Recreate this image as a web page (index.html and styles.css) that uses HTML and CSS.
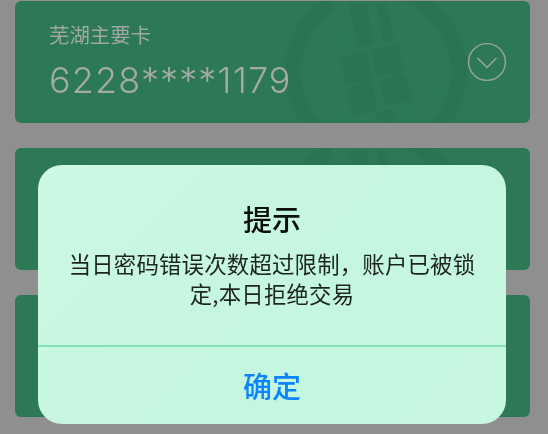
FILE: index.html
```html
<!DOCTYPE html>
<html lang="zh-CN">
<head>
<meta charset="utf-8">
<title>提示</title>
<link rel="stylesheet" href="styles.css">
</head>
<body>
<svg class="defs" width="0" height="0" aria-hidden="true">
  <symbol id="bank-mark" viewBox="15 1 515 121">
    <circle class="mark-ring" cx="376" cy="71" r="83"/>
    <polygon class="mark-gap" points="331,-2 349,-2 372,125 352,125"/>
    <polygon class="mark-gap" points="366,-2 378,-2 402,125 380,125"/>
    <polygon class="mark-block" points="348.3,3.3 366.7,3.3 373.3,43.3 357.3,46.7"/>
    <polygon class="mark-block" points="376.7,3.3 386.7,3.3 394,40 383.3,43.3"/>
    <polygon class="mark-block" points="341.7,56.7 366.7,51.7 371.7,80 346,85"/>
    <polygon class="mark-block" points="371.7,50 398.3,43.3 403.3,71.7 377.3,77.3"/>
    <polygon class="mark-block" points="346,87.3 371.7,82.7 377.3,110 353.3,115"/>
    <polygon class="mark-block" points="379.3,80 405,74 411.7,100 385,105"/>
    <polygon class="mark-block" points="376,113.3 391.7,108.3 398.3,123 378.3,123"/>
  </symbol>
</svg>
<main class="screen">
  <section class="card">
    <svg class="mark"><use href="#bank-mark"/></svg>
    <div class="card-text">
      <div class="card-label">芜湖主要卡</div>
      <div class="card-number">6228****1179</div>
    </div>
    <svg class="toggle" viewBox="0 0 40 40">
      <circle cx="20" cy="20" r="18.4"/>
      <path d="M10.5 16 L20 25.5 L29.5 16"/>
    </svg>
  </section>
  <section class="card card-covered"><svg class="mark"><use href="#bank-mark"/></svg></section>
  <section class="card card-covered"><svg class="mark"><use href="#bank-mark"/></svg></section>
  <div class="dialog" role="alertdialog">
    <div class="dialog-body">
      <h2 class="dialog-title">提示</h2>
      <p class="dialog-message">当日密码错误次数超过限制，账户已被锁定,本日拒绝交易</p>
    </div>
    <div class="dialog-action">确定</div>
  </div>
</main>
</body>
</html>
```
FILE: styles.css
```css
* { box-sizing: border-box; }
html, body { margin: 0; padding: 0; }
body {
  width: 548px;
  height: 434px;
  overflow: hidden;
  background: #8f8f8f;
  font-family: "Noto Sans CJK SC", "Noto Sans", sans-serif;
}
.defs { position: absolute; }
.screen {
  position: relative;
  width: 548px;
  height: 434px;
  padding: 1px 18px 0 15px;
  display: flex;
  flex-direction: column;
  gap: 25.5px;
  overflow: hidden;
}
.card {
  position: relative;
  flex: none;
  height: 121.5px;
  border-radius: 6px;
  background: #2d7956;
  display: flex;
  align-items: center;
  justify-content: space-between;
  padding: 0 23px 0 34px;
  overflow: hidden;
}
.mark {
  position: absolute;
  left: 0;
  top: 0;
  width: 100%;
  height: 100%;
  filter: blur(0.9px);
}
.mark-ring { fill: none; stroke: #2b7352; stroke-width: 16; }
.mark-gap { fill: #2d7956; }
.mark-block { fill: #2b7352; }
.card-text { position: relative; margin-top: 1px; filter: blur(0.3px); }
.card-label {
  font-size: 20.4px;
  line-height: 24px;
  color: #9fa8a3;
}
.card-number {
  margin-top: 12px;
  font-family: "Inter", "Noto Sans", sans-serif;
  font-weight: 300;
  font-size: 36px;
  line-height: 44px;
  letter-spacing: 1.1px;
  color: #a5aaa7;
}
.toggle {
  position: relative;
  width: 40px;
  height: 40px;
  fill: none;
  stroke: #9ca6a1;
  stroke-width: 1.4;
  filter: blur(0.3px);
}
.dialog {
  position: absolute;
  left: 38px;
  top: 164.5px;
  width: 468px;
  height: 259.5px;
  border-radius: 24px;
  background: linear-gradient(135deg, #ccf8e4 0%, #c5f6df 55%, #c7f7e1 100%);
  display: flex;
  flex-direction: column;
}
.dialog-body {
  height: 182.5px;
  padding: 34px 30px 0;
  border-bottom: 2px solid #82e2b4;
  text-align: center;
}
.dialog-title {
  margin: 0;
  font-size: 29px;
  line-height: 38px;
  font-weight: 500;
  color: #0b0f0d;
  filter: blur(0.3px);
}
.dialog-message {
  margin: 11px 0 0;
  font-size: 22.4px;
  line-height: 30.5px;
  letter-spacing: 0.2px;
  color: #1c2420;
  filter: blur(0.3px);
}
.dialog-action {
  flex: 1;
  display: flex;
  align-items: center;
  justify-content: center;
  padding-bottom: 1px;
  font-size: 29px;
  font-weight: 500;
  color: #0a84ff;
  filter: blur(0.3px);
}
```
